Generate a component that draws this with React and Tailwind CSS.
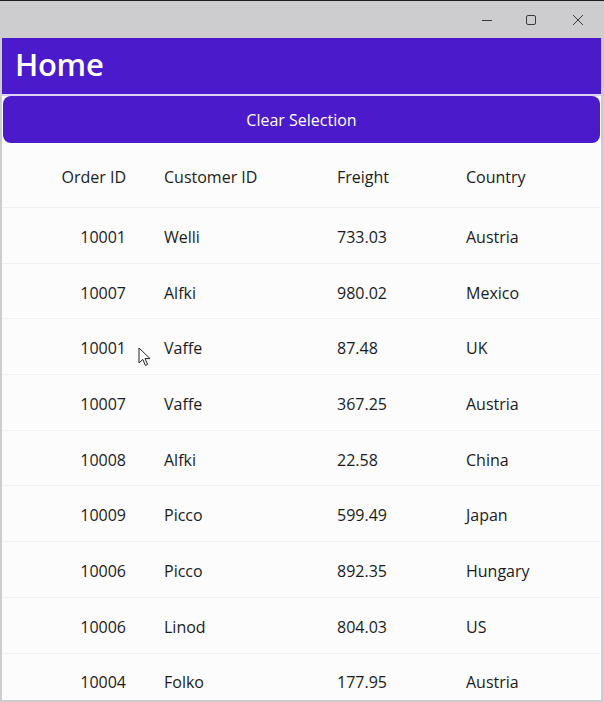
import React from 'react';

const orders = [
  { id: '10001', customer: 'Welli', freight: '733.03', country: 'Austria' },
  { id: '10007', customer: 'Alfki', freight: '980.02', country: 'Mexico' },
  { id: '10001', customer: 'Vaffe', freight: '87.48', country: 'UK' },
  { id: '10007', customer: 'Vaffe', freight: '367.25', country: 'Austria' },
  { id: '10008', customer: 'Alfki', freight: '22.58', country: 'China' },
  { id: '10009', customer: 'Picco', freight: '599.49', country: 'Japan' },
  { id: '10006', customer: 'Picco', freight: '892.35', country: 'Hungary' },
  { id: '10006', customer: 'Linod', freight: '804.03', country: 'US' },
  { id: '10004', customer: 'Folko', freight: '177.95', country: 'Austria' },
];

function Cells({ a, b, c, d }) {
  return (
    <>
      <div className="w-[124px] shrink-0 text-right">{a}</div>
      <div className="w-[211px] shrink-0 pl-[38px]">{b}</div>
      <div className="w-[129px] shrink-0">{c}</div>
      <div>{d}</div>
    </>
  );
}

export default function App() {
  return (
    <div
      className="relative w-[604px] h-[702px] overflow-hidden bg-[#cdcccf] border-t border-[#1e1e1e] flex flex-col text-[#1b1b1b]"
      style={{ fontFamily: '"Open Sans", "Noto Sans", sans-serif' }}
    >
      {/* Title bar */}
      <div className="h-[37px] shrink-0 flex justify-end items-center text-[#3a3a3a]">
        <svg width="12" height="12" viewBox="0 0 12 12" className="mr-[32px]">
          <path d="M1 6.5h10" stroke="currentColor" strokeWidth="1" />
        </svg>
        <svg width="12" height="12" viewBox="0 0 12 12" className="mr-[35px]">
          <rect x="1.5" y="1.5" width="9" height="9" rx="1.5" fill="none" stroke="currentColor" strokeWidth="1" />
        </svg>
        <svg width="12" height="12" viewBox="0 0 12 12" className="mr-[20px]">
          <path d="M1 1l10 10M11 1L1 11" stroke="currentColor" strokeWidth="1" />
        </svg>
      </div>

      {/* Window content */}
      <div className="flex-1 ml-[2px] mr-[3px] mb-[2px] bg-[#fcfcfd] flex flex-col overflow-hidden">
        <div className="h-[56px] shrink-0 bg-[#4b1acb] flex items-center pl-[13px] pb-[4px]">
          <h1 className="text-white text-[31px] font-semibold leading-none tracking-[-0.3px]">Home</h1>
        </div>
        <div className="h-[2px] shrink-0 bg-[#ddd4f5]" />
        <button className="mx-[1px] mt-0 h-[47px] shrink-0 rounded-[8px] bg-[#4b1acb] text-white text-[16px]">
          Clear Selection
        </button>

        <div className="flex h-[65px] shrink-0 items-center pt-[3px] border-b border-[#f0eff3] text-[16px]">
          <Cells a="Order ID" b="Customer ID" c="Freight" d="Country" />
        </div>
        {orders.map((o, i) => (
          <div key={i} className="flex h-[55.7px] shrink-0 items-center pt-[3px] border-b border-[#f0eff3] text-[16px]">
            <Cells a={o.id} b={o.customer} c={o.freight} d={o.country} />
          </div>
        ))}
      </div>

      {/* mouse cursor */}
      <svg className="absolute left-[138px] top-[346px]" width="13" height="20" viewBox="0 0 13 20">
        <path d="M1 1v15l3.8-3.6 2.6 6 2.2-1-2.6-5.8H12z" fill="#fff" stroke="#222" strokeWidth="1" strokeLinejoin="round" />
      </svg>
    </div>
  );
}
